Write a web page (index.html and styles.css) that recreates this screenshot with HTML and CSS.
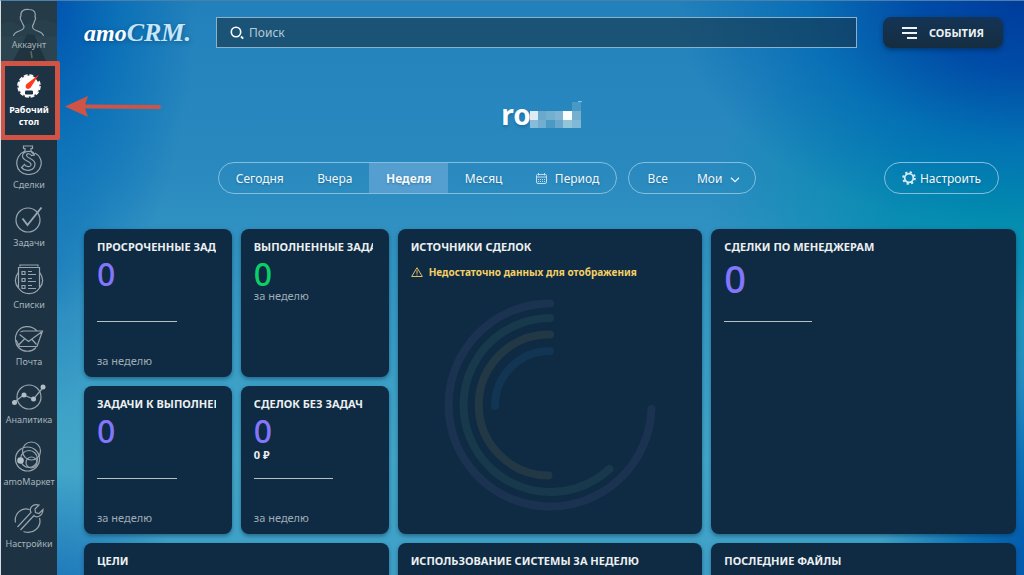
FILE: index.html
```html
<!DOCTYPE html>
<html lang="ru">
<head>
<meta charset="utf-8">
<meta name="viewport" content="width=device-width, initial-scale=1">
<title>amoCRM — Рабочий стол</title>
<link rel="stylesheet" href="styles.css">
</head>
<body>
<div class="app">
  <nav class="sidebar" aria-label="Главное меню">
    <a class="account" href="#account">
      <svg class="scenery" viewBox="0 0 56 61" preserveAspectRatio="none" aria-hidden="true"><path fill="#28404b" d="M0 24 10 20 20 26 30 22 42 18 56 23V38H0z"/><path fill="#2b4450" d="M0 36H56V61H0z"/><path fill="#20343f" d="M26 34h7l12 27H12z"/><path stroke="#5e6c5d" stroke-width="1.500" d="M30 51 31 58"/></svg>
      <svg class="icon" width="34" height="30" viewBox="0 0 34 30"><path d="M1.500 28c1-6 10-4 10.500-9 0-2-2-3-2.500-6C8 12 8 8 9 8 8 3 12 1 17 1.500c6 0 7 4 6 7.500 1 0 .5 3-.500 4-.5 3-2 4-2 6 .5 5 10 3 11 9"/></svg>
      <span class="label">Аккаунт</span>
    </a>
    <a class="nav-item active" href="#dashboard">
      <svg width="24" height="24" viewBox="0 0 24 24"><circle cx="12" cy="12" r="10.500" fill="#fff"/><circle cx="12" cy="12" r="11" fill="none" stroke="#fff" stroke-width="1.500" stroke-dasharray="4 1.760"/><rect x="8" y="16.500" width="8" height="4" rx="1.200" fill="#1d3344"/><path fill="#1d3344" d="M17 2l5-2 2 4-3 4z"/><path fill="#ff3a1d" d="M22 .5 10.300 9.500C6.500 12 10 17.500 13.700 13.500z"/></svg>
      <span class="label">Рабочий стол</span>
    </a>
    <div class="nav-list">
      <a class="nav-item" href="#leads"><svg class="icon" width="30" height="30" viewBox="0 0 30 30"><path d="M11 6V3.500H9.500V1h9v2.500H17V6M11 6C-1 11 0 29 14.500 29.500 29 29 31 13 21 8M20.500 10C20 5 9.500 5 8.500 10.500c-1 6 9 5 8.500 9.500-.5 2.500-5 2-6.500-.500l-3 3C12 28 21 25 21 19c0-6-9-5.500-8.500-9 .5-2 4-1.500 5 .500zM17 6.500l3.500 3.500"/></svg><span class="label">Сделки</span></a>
      <a class="nav-item" href="#tasks"><svg class="icon" width="30" height="27" viewBox="0 0 30 27"><circle cx="14" cy="14" r="12"/><path stroke-width="2" d="m8.500 12.500 5 6.500L27.500 1.500"/></svg><span class="label">Задачи</span></a>
      <a class="nav-item" href="#lists"><svg class="icon" width="30" height="31" viewBox="0 0 30 31"><path d="M6 2.500V1h18v1.500M4.500 23.500v-20H25.500v20M4.500 8C1 13 0 19 4.500 24c5 7.500 16 7.500 21 0C30 19 29 13 25.500 8M8 7.500h3v3H8zm0 7h3v3H8zm0 7h3v3H8zM14 7.500h4m-4 3h8M14 14.500h4m-4 3h8M14 21.500h4m-4 3h8"/></svg><span class="label">Списки</span></a>
      <a class="nav-item" href="#mail"><svg class="icon" width="30" height="26" viewBox="0 0 30 26"><path d="M23 5C17-1.500 7-.500 3 6.500c-2.500 5-2 11 1.500 15 5 5 13 5 17.500 0M6.500 6 9 5h19.500l-5.500 15.500H5.500L2 14M5.500 8.500l9 7L27.500 6M5 18.500l5.500-5.500M22.500 18.500 18 13.500"/></svg><span class="label">Почта</span></a>
      <a class="nav-item" href="#stats"><svg class="icon" width="36" height="27" viewBox="0 0 36 27"><circle cx="18" cy="14" r="12"/><path d="M3 19.500 12.500 12l10 4L32.500 4"/><g class="dots"><circle cx="3.500" cy="19.500" r="2.500"/><circle cx="13" cy="12" r="2.500"/><circle cx="22.500" cy="16" r="2.500"/><circle cx="32" cy="4" r="2.500"/></g></svg><span class="label">Аналитика</span></a>
      <a class="nav-item" href="#market"><svg class="icon" width="30" height="31" viewBox="0 0 30 31"><circle cx="13.500" cy="18" r="12"/><circle cx="17.500" cy="10" r="9"/><circle cx="15" cy="18" r="8.500"/><circle cx="17.500" cy="21.500" r="5.500"/><g class="dots"><circle cx="6.500" cy="19.500" r="3.300"/></g></svg><span class="label">amoМаркет</span></a>
      <a class="nav-item" href="#settings"><svg class="icon" width="30" height="31" viewBox="0 0 30 31"><path d="M15.500 6.500C7 4 0 11 1.500 19.500M25.500 15C28 24 19 32 9.500 28.500M6.500 27 20 12.500C22 15 28.500 14 29 6.500L25 10.500 21.500 9.500 21 6 25 2C18 0 15 6 17 9.500L3.500 24"/></svg><span class="label">Настройки</span></a>
    </div>
  </nav>

  <main class="main">
    <header class="header">
      <a class="logo" href="#home">amo<span class="logo-crm">CRM.</span></a>
      <label class="search">
        <svg width="14" height="14" viewBox="0 0 14 14" aria-hidden="true"><circle cx="6" cy="6" r="4.700" fill="none" stroke="#fff" stroke-width="1.600"/><path stroke="#fff" stroke-width="1.800" d="m11 10.500 2.200 2.200"/></svg>
        <input type="search" placeholder="Поиск" aria-label="Поиск">
      </label>
      <button class="events" type="button">
        <svg width="15" height="12" viewBox="0 0 15 12" aria-hidden="true"><path fill="#f0f3f5" d="M0 0h15v2H0zM0 5h15v2H0zM5 10h10v2H5z"/></svg>
        СОБЫТИЯ
      </button>
    </header>

    <h1 class="title">ro<svg width="53" height="27" viewBox="0 0 53 27" shape-rendering="crispEdges" aria-hidden="true"><path fill="#dcecf4" d="M1 10h8v9H1z"/><path fill="#6ba9cc" d="M9 10h8v9H9z"/><path fill="#72b0d0" d="M17 10h9v9h-9z"/><path fill="#7fb4d4" d="M26 10h8v9h-8z"/><path fill="#fafdfe" d="M34 10h9v9h-9z"/><path fill="#74b0cd" d="M43 10h9v9h-9z"/><path fill="#86bcd9" d="M1 19h8v8H1z"/><path fill="#71aed1" d="M9 19h8v8H9z"/><path fill="#4a9ac4" d="M17 19h9v8h-9z"/><path fill="#68a8cd" d="M26 19h8v8h-8z"/><path fill="#92c4da" d="M34 19h9v8h-9z"/><path fill="#80b8d6" d="M43 19h9v8h-9z"/><path fill="#4899c6" d="M43 1h9v9h-9z"/><path fill="#8cc0dc" d="M49 0h4v1h-4z"/></svg></h1>

    <div class="filters">
      <div class="group period">
        <button type="button">Сегодня</button>
        <button type="button">Вчера</button>
        <button type="button" class="selected" aria-pressed="true">Неделя</button>
        <button type="button">Месяц</button>
        <button type="button"><svg width="11" height="11" viewBox="0 0 11 11" fill="none" stroke="#c3ddee" aria-hidden="true"><path d="M.5 4V2.500Q.5 1.500 1.500 1.500h8q1 0 1 1V9q0 1.500-1.500 1.500H2Q.5 10.500.5 9zh10M2.500 0v2.500M8.500 0v2.500"/><path stroke-dasharray="1 1" d="M2 6.500h7M2 8.500h7"/></svg>Период</button>
      </div>
      <div class="group owner">
        <button type="button">Все</button>
        <button type="button">Мои<svg width="10" height="6" viewBox="0 0 10 6" fill="none" stroke="#eaf4fa" stroke-width="1.300" aria-hidden="true"><path d="m1 .7 4 4 4-4"/></svg></button>
      </div>
      <div class="group customize">
        <button type="button"><svg width="14" height="14" viewBox="0 0 14 14" fill="none" stroke="#d9edf5" aria-hidden="true"><circle cx="7" cy="7" r="4.300" stroke-width="1.700"/><circle cx="7" cy="7" r="5.800" stroke-width="2" stroke-dasharray="2.200 2.355"/></svg>Настроить</button>
      </div>
    </div>

    <section class="cards">
      <article class="card">
        <h2>ПРОСРОЧЕННЫЕ ЗАДАЧИ</h2>
        <strong class="value">0</strong>
        <hr class="rule">
        <p class="note bottom">за неделю</p>
      </article>
      <article class="card">
        <h2>ВЫПОЛНЕННЫЕ ЗАДАЧИ</h2>
        <strong class="value green">0</strong>
        <p class="note">за неделю</p>
      </article>
      <article class="card large">
        <h2>ИСТОЧНИКИ СДЕЛОК</h2>
        <p class="warning"><svg width="12" height="10" viewBox="0 0 12 10" fill="none" stroke="#f4cf66" stroke-width=".9" aria-hidden="true"><path d="M6 .700 11.300 9.500H.7zM6 3.200v3.600M6 7.500v1"/></svg>Недостаточно данных для отображения</p>
        <svg class="rings" width="220" height="220" viewBox="0 0 220 220" fill="none" stroke-width="8" stroke-linecap="round" aria-hidden="true">
          <path stroke="#1b3350" d="M110 8.500A101.500 101.500 0 1 0 211.500 114"/>
          <path stroke="#17394b" d="M110 23A87 87 0 1 0 169.500 174"/>
          <path stroke="#223845" d="M110 39.500A70.500 70.500 0 1 0 108.500 180.500"/>
          <path stroke="#113553" d="M110 56A55 55 0 0 0 55 111"/>
        </svg>
      </article>
      <article class="card large">
        <h2>СДЕЛКИ ПО МЕНЕДЖЕРАМ</h2>
        <strong class="value big">0</strong>
        <hr class="rule">
      </article>
      <article class="card">
        <h2>ЗАДАЧИ К ВЫПОЛНЕНИЮ</h2>
        <strong class="value">0</strong>
        <hr class="rule">
        <p class="note bottom">за неделю</p>
      </article>
      <article class="card">
        <h2>СДЕЛОК БЕЗ ЗАДАЧ</h2>
        <strong class="value">0</strong>
        <p class="sum">0 ₽</p>
        <hr class="rule">
        <p class="note bottom">за неделю</p>
      </article>
      <article class="card wide"><h2>ЦЕЛИ</h2></article>
      <article class="card wide"><h2>ИСПОЛЬЗОВАНИЕ СИСТЕМЫ ЗА НЕДЕЛЮ</h2></article>
      <article class="card wide"><h2>ПОСЛЕДНИЕ ФАЙЛЫ</h2></article>
    </section>
  </main>
  <div class="marker" aria-hidden="true"></div>
  <svg class="arrow" width="98" height="22" viewBox="0 0 98 22" aria-hidden="true"><path stroke="#d05446" stroke-width="4" stroke-linecap="round" d="M18 10.500 94 11"/><path fill="#d05446" d="M0 10.500 23 0 19.500 10.500 23 21z"/></svg>
</div>
</body>
</html>
```
FILE: styles.css
```css
* {
  box-sizing: border-box;
}

body {
  margin: 0;
  font-family: "Noto Sans", "Open Sans", sans-serif;
  color: #fff;
}

button,
input {
  font: inherit;
  color: inherit;
}

h1,
h2,
p {
  margin: 0;
}

a {
  color: inherit;
  text-decoration: none;
}

.app {
  position: relative;
  display: flex;
  height: 100vh;
  overflow: hidden;
  border-top: 1px solid #4c7fae;
  border-left: 1px solid #d6dde2;
  background:
    radial-gradient(ellipse 34% 40% at 100% 0, #003c9b 0, #004ca6 30%, #0068b4bb 62%, #0072b400 100%),
    radial-gradient(ellipse 28% 34% at 97% 34%, #0090ad 0, #008cafcc 35%, #008cb000 100%),
    radial-gradient(ellipse 14% 55% at 5% 0, #0054b0 0, #0068b6aa 45%, #1f7cba00 100%),
    radial-gradient(ellipse 16% 44% at 102% 98%, #0052ab 0, #0066b2cc 45%, #1c80bb00 100%),
    radial-gradient(ellipse 6% 26% at 5% 46%, #1b78b888 0, #1f7cba00 100%),
    radial-gradient(ellipse 14% 28% at 5% 110%, #0f66b4 0, #1f7cba00 100%),
    linear-gradient(#2281bb 0, #2a8abf 30%, #3598c4 50%, #42a6c9 80%, #3fa0c7 100%);
}

.sidebar {
  flex: none;
  width: 56px;
  background: #1d3344;
  font-size: 9px;
  line-height: 14px;
  color: #a8b3bb;
  text-align: center;
}

.icon {
  fill: none;
  stroke: #99a5ae;
  stroke-width: 1.2;
}

.dots {
  fill: #b3bdc4;
  stroke: none;
}

.account {
  position: relative;
  display: flex;
  flex-direction: column;
  align-items: center;
  height: 60px;
  padding-top: 7px;
  background: #253b47;
}

.account .icon,
.account .label {
  position: relative;
}

.scenery {
  position: absolute;
  inset: 0;
  width: 100%;
  height: 100%;
}

.nav-item {
  display: flex;
  flex-direction: column;
  align-items: center;
  gap: 3px;
}

.active {
  height: 78px;
  padding: 13px 8px 0;
  gap: 6px;
  line-height: 12px;
  font-weight: bold;
  color: #fff;
}

.nav-list {
  display: flex;
  flex-direction: column;
  gap: 14px;
  padding-top: 6px;
}

.marker {
  position: absolute;
  top: 60px;
  left: -1px;
  width: 60px;
  height: 79px;
  border: 5px solid #d05446;
  border-radius: 2px;
}

.arrow {
  position: absolute;
  top: 95px;
  left: 64px;
}

.main {
  flex: 1;
  min-width: 0;
  padding: 16px 8px 0 27px;
}

.header {
  display: flex;
  align-items: center;
  height: 31px;
  padding-right: 13px;
}

.logo {
  width: 132px;
  font: italic bold 24px/31px "Liberation Serif", serif;
  text-shadow: 0 1px 4px #00305a80;
}

.logo-crm {
  font-size: 26px;
  color: #c5e6fb;
}

.search {
  display: flex;
  flex: 1;
  align-items: center;
  gap: 5px;
  height: 31px;
  padding: 0 13px;
  border: 1px solid #8bb1cb;
  background: #15334899;
}

.search input {
  flex: 1;
  min-width: 0;
  padding: 0;
  border: 0;
  outline: 0;
  background: none;
  font-size: 12px;
}

.search input::placeholder {
  color: #b4cbd9;
  opacity: 1;
}

.events {
  display: flex;
  align-items: center;
  justify-content: center;
  gap: 12px;
  width: 120px;
  height: 31px;
  margin-left: 26px;
  padding: 0;
  border: 0;
  border-radius: 8px;
  background: linear-gradient(#143456, #152d40);
  box-shadow: 0 2px 4px #00204080;
  font-size: 11px;
  font-weight: bold;
  color: #edf1f4;
}

.title {
  display: flex;
  align-items: center;
  justify-content: center;
  margin-top: 47px;
  padding-right: 17px;
  font-size: 28px;
  line-height: 38px;
  text-shadow: 0 2px 3px #0a4a7560;
}

.title svg {
  margin-left: -2px;
}

.filters {
  display: flex;
  margin-top: 29px;
  padding: 0 17px 0 134px;
}

.group {
  display: flex;
  height: 32px;
  overflow: hidden;
  border: 1px solid #84bddd;
  border-radius: 16px;
}

.group button {
  display: flex;
  flex: 1 1 auto;
  align-items: center;
  justify-content: center;
  padding: 0 14px;
  border: 0;
  background: none;
  font-size: 12px;
  color: #f2f8fb;
  text-shadow: 0 1px 2px #0a4a7580;
}

.group .selected {
  background: #559fd0;
  font-weight: bold;
}

.period {
  width: 399px;
}

.period svg {
  margin-right: 8px;
}

.owner {
  width: 128px;
  margin-left: 11px;
  padding-left: 4px;
}

.owner svg {
  margin: 3px 0 0 8px;
}

.customize {
  width: 115px;
  margin-left: auto;
}

.customize svg {
  margin-right: 4px;
}

.cards {
  display: grid;
  grid-template-columns: repeat(6, minmax(0, 1fr));
  grid-auto-rows: 148px;
  gap: 9px;
  margin-top: 35px;
}

.card {
  display: flex;
  flex-direction: column;
  align-items: flex-start;
  padding: 10px 16px 9px 13px;
  border-radius: 8px;
  background: #0e2b43;
  box-shadow: 0 2px 4px #0a304c80;
  overflow: hidden;
}

.large {
  grid-column: span 2;
  grid-row: span 2;
  padding-right: 13px;
}

.wide {
  grid-column: span 2;
}

.card h2 {
  width: 100%;
  overflow: hidden;
  white-space: nowrap;
  font-size: 11px;
  line-height: 16px;
  color: #eceff1;
}

.value {
  height: 32px;
  margin-top: 2px;
  font-size: 32px;
  line-height: 34px;
  font-weight: 500;
  color: #8376fb;
}

.big {
  height: 44px;
  font-size: 38px;
  line-height: 42px;
}

.green {
  color: #0bd068;
}

.rule {
  width: 67%;
  margin: 32px 0 0;
  border: 0;
  border-top: 1px solid #b7c0c7;
}

.big + .rule {
  width: 88px;
  margin-top: 20px;
}

.note {
  font-size: 11px;
  line-height: 14px;
  color: #a0acb5;
}

.bottom {
  margin-top: auto;
}

.sum {
  margin-top: 2px;
  font-size: 11px;
  line-height: 14px;
  font-weight: bold;
  color: #eceff1;
}

.sum + .rule {
  margin-top: 16px;
}

.warning {
  display: flex;
  align-items: center;
  gap: 6px;
  margin-top: 10px;
  font-size: 10px;
  line-height: 14px;
  font-weight: bold;
  color: #f4cf66;
}

.rings {
  margin: 16px auto 0;
}
```
